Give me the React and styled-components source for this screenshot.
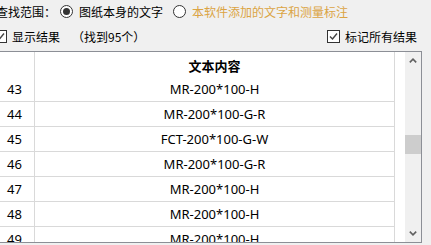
import React from 'react';
import styled, { createGlobalStyle } from 'styled-components';

const rows = [
  { no: 43, text: 'MR-200*100-H' },
  { no: 44, text: 'MR-200*100-G-R' },
  { no: 45, text: 'FCT-200*100-G-W' },
  { no: 46, text: 'MR-200*100-G-R' },
  { no: 47, text: 'MR-200*100-H' },
  { no: 48, text: 'MR-200*100-H' },
  { no: 49, text: 'MR-200*100-H' },
];

const GlobalStyle = createGlobalStyle`
  html, body {
    margin: 0;
    padding: 0;
    background: #f0f0f0;
    overflow: hidden;
  }
  body {
    font-family: "Noto Sans", "Noto Sans CJK SC", sans-serif;
    color: #000;
  }
`;

const Page = styled.div`
  width: 431px;
  height: 245px;
  overflow: hidden;
`;

const ScopeRow = styled.div`
  display: flex;
  align-items: center;
  height: 22px;
  margin-left: -4px;
  font-family: "Noto Sans CJK SC", sans-serif;
  font-size: 12px;
`;

const Label = styled.span`
  width: 60px;
  margin-right: 4px;
  white-space: nowrap;
`;

const Option = styled.label`
  display: flex;
  align-items: center;
  gap: 6px;
  margin-right: 10px;
  white-space: nowrap;
  color: ${p => (p.$accent ? '#dba443' : '#000')};
`;

const Radio = styled.span`
  box-sizing: border-box;
  width: 13px;
  height: 13px;
  border-radius: 50%;
  border: 1px solid #333;
  background: #fff;
  display: flex;
  align-items: center;
  justify-content: center;
  &::after {
    content: '';
    display: ${p => (p.$checked ? 'block' : 'none')};
    width: 7px;
    height: 7px;
    border-radius: 50%;
    background: #333;
  }
`;

const OptionsRow = styled.div`
  display: flex;
  align-items: center;
  height: 20px;
  margin-top: 4px;
  margin-left: -6px;
  margin-right: 14px;
  font-family: "Noto Sans CJK SC", sans-serif;
  font-size: 12px;
`;

const Check = styled.label`
  display: flex;
  align-items: center;
  gap: 5px;
  white-space: nowrap;
  margin-left: ${p => (p.$right ? 'auto' : '0')};
`;

const Box = styled.span`
  box-sizing: border-box;
  width: 13px;
  height: 13px;
  border: 1px solid #333;
  background: #fff;
  display: flex;
  align-items: center;
  justify-content: center;
  svg {
    width: 9px;
    height: 9px;
  }
`;

const Count = styled.span`
  margin-left: 12px;
  white-space: nowrap;
`;

const Grid = styled.div`
  box-sizing: border-box;
  display: flex;
  width: 432px;
  height: 192px;
  margin-top: 5px;
  margin-left: -10px;
  border: 1px solid #8c8f96;
  background: #fff;
`;

const Body = styled.div`
  flex: 1;
  overflow: hidden;
  background: #fff;
`;

const Table = styled.div`
  width: 404px;
`;

const Row = styled.div`
  display: grid;
  grid-template-columns: 44px 360px;
  height: ${p => (p.$head ? '25px' : '24px')};
  border-bottom: ${p => (p.$head ? 'none' : '1px solid #d9d9d9')};
  font-size: 13px;
  line-height: 25px;
`;

const NoCell = styled.div`
  box-sizing: border-box;
  border-right: 1px solid #d9d9d9;
  padding-left: 16px;
`;

const TextCell = styled.div`
  box-sizing: border-box;
  border-right: 1px solid #d9d9d9;
  text-align: center;
  white-space: nowrap;
`;

const HeadCell = styled(TextCell)`
  font-family: "Noto Sans CJK SC", sans-serif;
  font-weight: 700;
  font-size: 13px;
  line-height: 27px;
`;

const Scrollbar = styled.div`
  width: 16px;
  display: flex;
  flex-direction: column;
  background: #f0f0f0;
`;

const ArrowButton = styled.div`
  height: 17px;
  display: flex;
  align-items: center;
  justify-content: center;
  svg {
    width: 8px;
    height: 5px;
  }
`;

const Track = styled.div`
  flex: 1;
`;

const Thumb = styled.div`
  height: 19px;
  margin-top: 66px;
  background: #cdcdcd;
`;

const Chevron = ({ up }) => (
  <svg viewBox="0 0 8 5">
    <path
      d={up ? 'M0.8 4.4 L4 1.2 L7.2 4.4' : 'M0.8 0.6 L4 3.8 L7.2 0.6'}
      fill="none"
      stroke="#606060"
      strokeWidth="1.6"
    />
  </svg>
);

const Tick = () => (
  <svg viewBox="0 0 9 9">
    <path d="M1 4.6 L3.5 7 L8 1.5" fill="none" stroke="#444" strokeWidth="1.4" />
  </svg>
);

const App = () => {
  return (
    <>
      <GlobalStyle />
      <Page>
        <ScopeRow>
          <Label>查找范围：</Label>
          <Option>
            <Radio $checked />
            图纸本身的文字
          </Option>
          <Option $accent>
            <Radio />
            本软件添加的文字和测量标注
          </Option>
        </ScopeRow>
        <OptionsRow>
          <Check>
            <Box>
              <Tick />
            </Box>
            显示结果
          </Check>
          <Count>（找到95个）</Count>
          <Check $right>
            <Box>
              <Tick />
            </Box>
            标记所有结果
          </Check>
        </OptionsRow>
        <Grid>
          <Body>
            <Table>
              <Row $head>
                <NoCell />
                <HeadCell>文本内容</HeadCell>
              </Row>
              {rows.map(r => (
                <Row key={r.no}>
                  <NoCell>{r.no}</NoCell>
                  <TextCell>{r.text}</TextCell>
                </Row>
              ))}
            </Table>
          </Body>
          <Scrollbar>
            <ArrowButton>
              <Chevron up />
            </ArrowButton>
            <Track>
              <Thumb />
            </Track>
            <ArrowButton>
              <Chevron />
            </ArrowButton>
          </Scrollbar>
        </Grid>
      </Page>
    </>
  );
};

export default App;
